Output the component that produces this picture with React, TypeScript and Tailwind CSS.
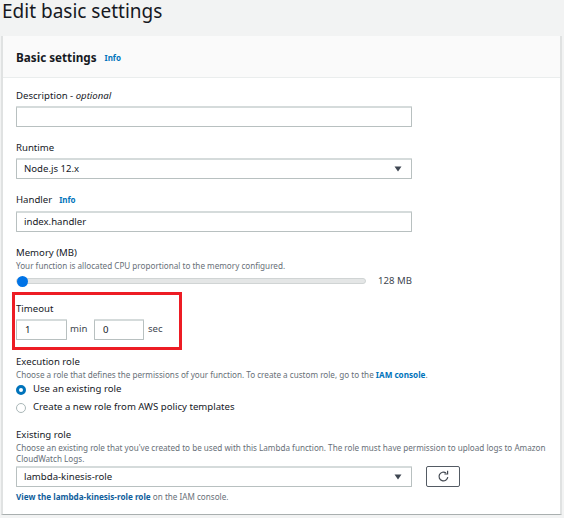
import React from "react";

const font = { fontFamily: '"Noto Sans", sans-serif' };

function Caret() {
  return (
    <svg width="8" height="6" viewBox="0 0 8 6" className="shrink-0">
      <path d="M0.5 0.5H7.5L4 5.5Z" fill="#3f4752" />
    </svg>
  );
}

function Box({ children, className = "" }: { children?: React.ReactNode; className?: string }) {
  return (
    <div className={`h-[21px] flex items-center border border-[#b8c0c0] border-t-[#d5dbdb] border-t-2 bg-white text-[9.6px] text-[#16191f] rounded-[1px] ${className}`}>
      {children}
    </div>
  );
}

function Label({ children }: { children: React.ReactNode }) {
  return <div className="text-[9.6px] leading-[14px] text-[#16191f]">{children}</div>;
}

function Hint({ children }: { children: React.ReactNode }) {
  return <div className="text-[8.15px] leading-[11px] text-[#687078]">{children}</div>;
}

function Info() {
  return <span className="text-[8px] font-bold text-[#0073bb]">Info</span>;
}

export default function App() {
  return (
    <div style={font} className="relative w-[564px] h-[518px] overflow-hidden bg-[#f2f3f3]">
      <div className="h-[36px] pl-[2px] text-[19px] leading-[22px] text-[#16191f]">Edit basic settings</div>

      <div className="ml-[1px] w-[561px] h-[479px] bg-white border-l-2 border-r-2 border-[#e0e2e2] border-b border-b-[#a9afaf]">
        <div className="h-[42px] bg-[#fafafa] border-b border-[#eaeded] pl-[13px] pt-[3px] flex items-center gap-[8px]">
          <span className="text-[11.7px] font-bold text-[#16191f]">Basic settings</span>
          <Info />
        </div>

        <div className="pl-[13px] pt-[11px] flex flex-col">
          <Label>
            Description - <em>optional</em>
          </Label>
          <Box className="w-[396px] mt-[3px]" />

          <div className="mt-[14px]"><Label>Runtime</Label></div>
          <Box className="w-[396px] mt-[3px] pl-[7px] pr-[9px] justify-between">
            <span>Node.js 12.x</span>
            <Caret />
          </Box>

          <div className="mt-[14px] flex items-center gap-[7px] h-[14px]">
            <span className="text-[9.6px] text-[#16191f]">Handler</span>
            <Info />
          </div>
          <Box className="w-[396px] mt-[4px] pl-[7px]">index.handler</Box>

          <div className="mt-[14px]"><Label>Memory (MB)</Label></div>
          <Hint>Your function is allocated CPU proportional to the memory configured.</Hint>
          <div className="mt-[4px] w-[396px] h-[12px] flex items-center">
            <div className="relative w-[350px] h-[6px] rounded-full bg-[#e4e6e6] border border-[#d0d4d4]">
              <div className="absolute left-0 top-[-3.5px] w-[11px] h-[11px] rounded-full bg-[#0073e6]" />
            </div>
            <span className="ml-auto text-[9.6px] text-[#414750]">128 MB</span>
          </div>

          <div className="mt-[15px]"><Label>Timeout</Label></div>
          <div className="mt-[3px] flex items-center text-[9.6px] text-[#414750]">
            <Box className="w-[51px] pl-[8px]">1</Box>
            <span className="ml-[3px] w-[24px]">min</span>
            <Box className="w-[50px] pl-[8px]">0</Box>
            <span className="ml-[4px]">sec</span>
          </div>

          <div className="mt-[15px]"><Label>Execution role</Label></div>
          <Hint>
            Choose a role that defines the permissions of your function. To create a custom role, go to the{" "}
            <span className="font-bold text-[#0073bb]">IAM console</span>.
          </Hint>
          <div className="mt-[2px] flex items-center gap-[7px] h-[15px] text-[9.6px] text-[#16191f]">
            <span className="w-[10px] h-[10px] rounded-full border-[3px] border-[#0073bb] bg-white" />
            Use an existing role
          </div>
          <div className="mt-[3px] flex items-center gap-[7px] h-[15px] text-[9.6px] text-[#16191f]">
            <span className="w-[10px] h-[10px] rounded-full border border-[#aab7b8] bg-white" />
            Create a new role from AWS policy templates
          </div>

          <div className="mt-[13px]"><Label>Existing role</Label></div>
          <div className="w-[532px]">
            <Hint>
              Choose an existing role that you've created to be used with this Lambda function. The role must have permission to upload logs to Amazon CloudWatch Logs.
            </Hint>
          </div>
          <div className="mt-[2px] flex items-center gap-[14px]">
            <Box className="w-[396px] pl-[7px] pr-[9px] justify-between">
              <span>lambda-kinesis-role</span>
              <Caret />
            </Box>
            <div className="w-[34px] h-[21px] flex items-center justify-center border border-[#545b64] rounded-[2px] bg-white">
              <svg width="13" height="13" viewBox="0 0 13 13" fill="none" stroke="#414750" strokeWidth="1.2">
                <path d="M10.8 7.2A4.4 4.4 0 1 1 9 2.9" />
                <path d="M10.6 0.8V4H7.4" />
              </svg>
            </div>
          </div>
          <div className="mt-[4px] text-[8.15px] leading-[11px] text-[#687078]">
            <span className="font-bold text-[#0f5e9c]">View the lambda-kinesis-role role</span> on the IAM console.
          </div>
        </div>
      </div>

      <div className="absolute left-[12px] top-[292px] w-[170px] h-[58px] border-[3px] border-[#ed1c24]" />
    </div>
  );
}
